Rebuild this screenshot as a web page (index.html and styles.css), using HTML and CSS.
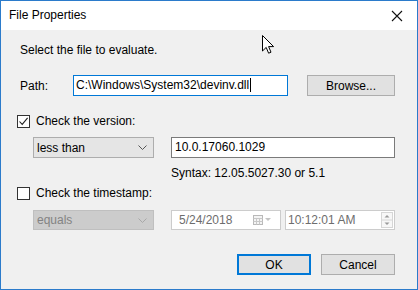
FILE: index.html
```html
<!DOCTYPE html>
<html>
<head>
<meta charset="utf-8">
<link rel="stylesheet" href="styles.css">
</head>
<body>
<div class="window">
  <div class="titlebar">
    <span class="title">File Properties</span>
    <svg class="close" width="12" height="12" viewBox="0 0 12 12"><path d="M1 1 L11 11 M11 1 L1 11" stroke="#111" stroke-width="1.1" fill="none"/></svg>
  </div>
  <div class="content">
    <div class="intro">Select the file to evaluate.</div>
    <div class="row path-row">
      <span class="path-label">Path:</span>
      <div class="textbox focused path-box">C:\Windows\System32\devinv.dll<span class="caret"></span></div>
      <div class="button browse">Browse...</div>
    </div>
    <div class="row check-row first-check">
      <span class="checkbox"><svg width="11" height="11" viewBox="0 0 11 11"><path d="M1.5 5.5 L4.2 8.4 L9.6 1.8" stroke="#222" stroke-width="1.1" fill="none"/></svg></span>
      <span class="check-label">Check the version:</span>
    </div>
    <div class="row field-row version-row">
      <div class="combo">less than<svg class="chev" width="9" height="5" viewBox="0 0 9 5"><path d="M0.5 0.5 L4.5 4.5 L8.5 0.5" stroke="#555" fill="none"/></svg></div>
      <div class="textbox version-box">10.0.17060.1029</div>
    </div>
    <div class="syntax">Syntax: 12.05.5027.30 or 5.1</div>
    <div class="row check-row second-check">
      <span class="checkbox"></span>
      <span class="check-label">Check the timestamp:</span>
    </div>
    <div class="row field-row ts-row">
      <div class="combo disabled">equals<svg class="chev" width="9" height="5" viewBox="0 0 9 5"><path d="M0.5 0.5 L4.5 4.5 L8.5 0.5" stroke="#a8a8a8" fill="none"/></svg></div>
      <div class="picker date">
        <span class="ptext">5/24/2018</span>
        <svg class="cal" width="20" height="10" viewBox="0 0 20 10">
          <rect x="0.5" y="0.5" width="9" height="9" fill="#f4f4f4" stroke="#b9b9b9"/>
          <path d="M0.5 3.5 H9.5 M0.5 6.5 H9.5 M3.5 3.5 V9.5 M6.5 3.5 V9.5" stroke="#c8c8c8"/>
          <path d="M12 3 L18 3 L15 6 Z" fill="#c4c4c4"/>
        </svg>
      </div>
      <div class="picker time">
        <span class="ptext">10:12:01 AM</span>
        <svg class="spin" width="12" height="16" viewBox="0 0 12 16">
          <rect x="0.5" y="0.5" width="11" height="15" fill="#f7f7f7" stroke="#d6d6d6"/>
          <path d="M0.5 8 H11.5" stroke="#d6d6d6"/>
          <path d="M3.5 5.5 L6 3 L8.5 5.5 Z" fill="#9a9a9a"/>
          <path d="M3.5 10.5 L6 13 L8.5 10.5 Z" fill="#9a9a9a"/>
        </svg>
      </div>
    </div>
    <div class="row buttons">
      <div class="button ok">OK</div>
      <div class="button">Cancel</div>
    </div>
  </div>
  <svg class="cursor" width="13" height="20" viewBox="0 0 13 20">
    <path d="M0.5 0.5 L0.5 16 L4.2 12.4 L6.6 18.2 L9 17.2 L6.6 11.6 L11.6 11.6 Z" fill="#fff" stroke="#000" stroke-width="1" stroke-linejoin="miter"/>
  </svg>
</div>
</body>
</html>
```

FILE: styles.css
```css
* { box-sizing: border-box; }
html, body { margin: 0; padding: 0; }
body {
  width: 418px;
  height: 290px;
  font-family: "Liberation Sans", Arial, sans-serif;
  font-size: 12px;
  color: #000;
  background: #f0f0f0;
  overflow: hidden;
}
.window {
  position: relative;
  width: 418px;
  height: 290px;
  border: 1px solid #2b7bcb;
  background: #f0f0f0;
  display: flex;
  flex-direction: column;
}
.titlebar {
  height: 29px;
  background: #fff;
  display: flex;
  align-items: center;
  justify-content: space-between;
  padding: 0 14px 0 8px;
  flex-shrink: 0;
}
.title { font-size: 12px; line-height: 15px; margin-top: 0px; }
.close { display: block; }
.content {
  flex: 1;
  padding: 0 22px 0 16px;
  display: flex;
  flex-direction: column;
}
.intro {
  margin: 13px 0 0 3px;
  height: 15px;
  line-height: 15px;
}
.row { display: flex; align-items: center; }
.path-row { margin-top: 17px; height: 21px; }
.path-label { width: 53px; margin-left: 3px; }
.textbox {
  height: 21px;
  border: 1px solid #7a7a7a;
  background: #fff;
  line-height: 19px;
  padding-left: 2px;
  white-space: nowrap;
}
.textbox.focused { border-color: #0078d7; }
.path-box { width: 215px; }
.caret {
  display: inline-block;
  width: 1px;
  height: 14px;
  background: #000;
  vertical-align: -3px;
  margin-left: 1px;
}
.button {
  height: 21px;
  width: 74px;
  border: 1px solid #adadad;
  background: #e1e1e1;
  display: flex;
  align-items: center;
  justify-content: center;
}
.browse { width: 88px; margin-left: 19px; }
.check-row { height: 16px; }
.first-check { margin-top: 17px; }
.second-check { margin-top: 4px; }
.checkbox {
  width: 13px;
  height: 13px;
  border: 1px solid #333;
  background: #fff;
  display: flex;
  align-items: center;
  justify-content: center;
}
.checkbox svg { display: block; }
.check-label { margin-left: 6px; }
.field-row { height: 21px; }
.version-row { margin-top: 8px; }
.ts-row { margin-top: 9px; height: 20px; }
.combo {
  margin-left: 16px;
  width: 121px;
  height: 21px;
  border: 1px solid #adadad;
  background: #e5e5e5;
  display: flex;
  align-items: center;
  justify-content: space-between;
  padding: 0 6px 0 3px;
}
.combo.disabled {
  height: 20px;
  background: #cccccc;
  border-color: #bfbfbf;
  color: #838383;
}
.version-box { margin-left: 17px; flex: 1; padding-left: 3px; }
.syntax { margin: 8px 0 0 154px; height: 15px; line-height: 15px; }
.picker {
  height: 20px;
  width: 110px;
  border: 1px solid #cccccc;
  background: #fff;
  display: flex;
  align-items: center;
  justify-content: space-between;
  color: #6d6d6d;
}
.date { margin-left: 17px; padding: 0 7px 0 7px; }
.time { margin-left: 4px; padding: 0 1px 0 2px; }
.cal, .spin { display: block; }
.buttons {
  margin-top: 24px;
  justify-content: flex-end;
  gap: 10px;
}
.ok { border: 2px solid #0078d7; }
.cursor {
  position: absolute;
  left: 261px;
  top: 34px;
}
```
